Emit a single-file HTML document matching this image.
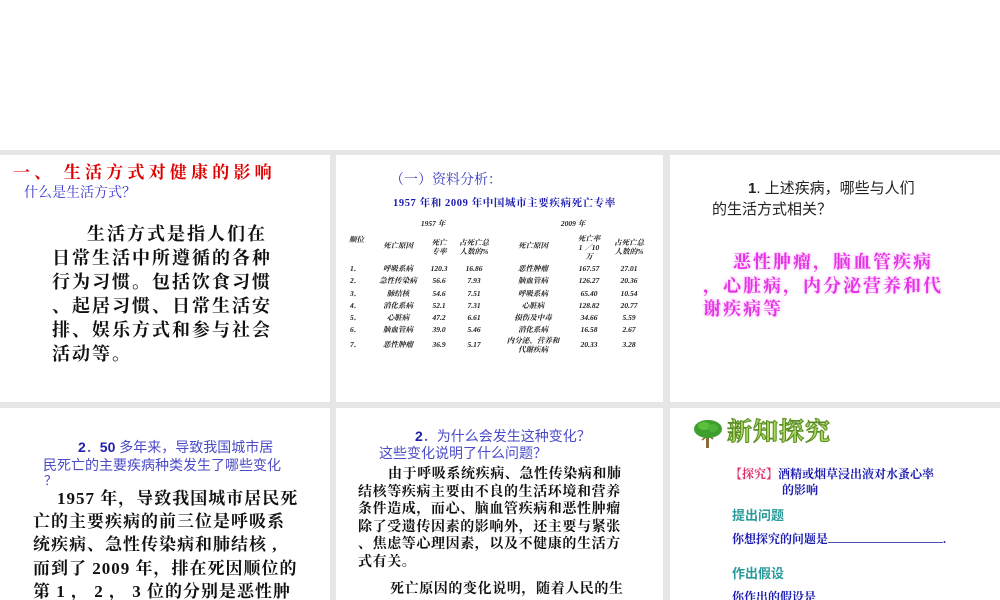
<!DOCTYPE html>
<html><head><meta charset="utf-8"><style>
*{margin:0;padding:0;box-sizing:border-box}
html,body{width:1000px;height:600px;overflow:hidden}
body{position:relative;background:#fff;font-family:"Liberation Serif","Noto Serif CJK SC","Noto Sans CJK SC",serif}
.g{position:absolute;background:#e6e6e6}
.p{position:absolute;background:#fff;overflow:hidden}
.t{position:absolute;white-space:nowrap;line-height:1}
.c{transform:translateX(-50%);text-align:center}
.tb{font-style:italic;font-weight:bold;font-size:7.5px;color:#222}
.bk{font-family:"Liberation Sans","Noto Sans CJK SC",sans-serif}
.ml{position:absolute;white-space:nowrap}
</style></head><body>
<div class="g" style="left:0;top:150px;width:1000px;height:450px"></div>
<div class="p" style="left:0;top:155px;width:330px;height:247px"></div>
<div class="p" style="left:336px;top:155px;width:327px;height:247px"></div>
<div class="p" style="left:670px;top:155px;width:330px;height:247px"></div>
<div class="p" style="left:0;top:408px;width:330px;height:192px"></div>
<div class="p" style="left:336px;top:408px;width:327px;height:192px"></div>
<div class="p" style="left:670px;top:408px;width:330px;height:192px"></div>

<!-- panel 1 -->
<div class="t" style="left:13px;top:164px;font-size:17px;font-weight:bold;color:#e00000;letter-spacing:4.2px">一、 生活方式对健康的影响</div>
<div class="t" style="left:24px;top:187px;font-size:14px;color:#3b3bd0">什么是生活方式？</div>
<div class="ml" style="left:52px;top:222px;font-size:18px;font-weight:bold;line-height:24px;letter-spacing:2px;color:#111"><span style="padding-left:35px"></span>生活方式是指人们在<br>日常生活中所遵循的各种<br>行为习惯。包括饮食习惯<br>、起居习惯、日常生活安<br>排、娱乐方式和参与社会<br>活动等。</div>

<!-- panel 2 -->
<div class="t" style="left:390px;top:174px;font-size:14px;color:#3b3bc0">（一）资料分析：</div>
<div class="t" style="left:393px;top:199px;font-size:10.5px;font-weight:bold;color:#1a1ab0;letter-spacing:0.6px">1957 年和 2009 年中国城市主要疾病死亡专率</div>
<div class="t tb c" style="left:433px;top:220px">1957 年</div>
<div class="t tb c" style="left:573px;top:220px">2009 年</div>
<div class="t tb" style="left:349px;top:236px">顺位</div>
<div class="t tb c" style="left:398px;top:242px">死亡原因</div>
<div class="t tb c" style="left:439px;top:238px;line-height:9px">死亡<br>专率</div>
<div class="t tb c" style="left:474px;top:238px;line-height:9px">占死亡总<br>人数的%</div>
<div class="t tb c" style="left:533px;top:242px">死亡原因</div>
<div class="t tb c" style="left:589px;top:234px;line-height:9px">死亡率<br>1 ／10<br>万</div>
<div class="t tb c" style="left:629px;top:238px;line-height:9px">占死亡总<br>人数的%</div>

<div class="t tb" style="left:350px;top:263px;line-height:12.3px">1．<br>2．<br>3．<br>4．<br>5．<br>6．</div>
<div class="t tb c" style="left:398px;top:263px;line-height:12.3px">呼吸系病<br>急性传染病<br>肺结核<br>消化系病<br>心脏病<br>脑血管病</div>
<div class="t tb c" style="left:439px;top:263px;line-height:12.3px">120.3<br>56.6<br>54.6<br>52.1<br>47.2<br>39.0</div>
<div class="t tb c" style="left:474px;top:263px;line-height:12.3px">16.86<br>7.93<br>7.51<br>7.31<br>6.61<br>5.46</div>
<div class="t tb c" style="left:533px;top:263px;line-height:12.3px">恶性肿瘤<br>脑血管病<br>呼吸系病<br>心脏病<br>损伤及中毒<br>消化系病</div>
<div class="t tb c" style="left:589px;top:263px;line-height:12.3px">167.57<br>126.27<br>65.40<br>128.82<br>34.66<br>16.58</div>
<div class="t tb c" style="left:629px;top:263px;line-height:12.3px">27.01<br>20.36<br>10.54<br>20.77<br>5.59<br>2.67</div>
<div class="t tb" style="left:350px;top:341px">7．</div>
<div class="t tb c" style="left:398px;top:341px">恶性肿瘤</div>
<div class="t tb c" style="left:439px;top:341px">36.9</div>
<div class="t tb c" style="left:474px;top:341px">5.17</div>
<div class="t tb c" style="left:533px;top:336px;line-height:9px">内分泌、营养和<br>代谢疾病</div>
<div class="t tb c" style="left:589px;top:341px">20.33</div>
<div class="t tb c" style="left:629px;top:341px">3.28</div>

<!-- panel 3 -->
<div class="t bk" style="left:748px;top:181px;font-size:15px;color:#222"><b>1</b>. 上述疾病，哪些与人们</div>
<div class="t bk" style="left:712px;top:202px;font-size:15px;color:#222">的生活方式相关？</div>
<div class="ml" style="left:703px;top:251px;font-size:18px;font-weight:bold;line-height:23.5px;letter-spacing:2px;color:#e633e6;text-shadow:0 0 3px #f7a8f7"><span style="padding-left:30px"></span>恶性肿瘤，脑血管疾病<br>，心脏病，内分泌营养和代<br>谢疾病等</div>

<!-- panel 4 -->
<div class="t bk" style="left:78px;top:440px;font-size:14px;color:#4b4bc8"><b style="color:#2020a8">2</b>．<b style="color:#2020a8">50</b> 多年来，导致我国城市居</div>
<div class="t bk" style="left:43px;top:458px;font-size:14px;color:#4b4bc8">民死亡的主要疾病种类发生了哪些变化</div>
<div class="t bk" style="left:44px;top:474px;font-size:13px;color:#4b4bc8">？</div>
<div class="ml" style="left:33px;top:487px;font-size:17px;font-weight:bold;line-height:23.2px;letter-spacing:1px;color:#111"><span style="padding-left:24px"></span>1957 年，导致我国城市居民死<br>亡的主要疾病的前三位是呼吸系<br>统疾病、急性传染病和肺结核 ,<br>而到了 2009 年，排在死因顺位的<br>第 1 ， 2 ， 3 位的分别是恶性肿</div>

<!-- panel 5 -->
<div class="t bk" style="left:415px;top:429px;font-size:14px;color:#4b4bc8"><b style="color:#2020a8">2</b>．为什么会发生这种变化？</div>
<div class="t bk" style="left:379px;top:446px;font-size:14px;color:#4b4bc8">这些变化说明了什么问题？</div>
<div class="ml" style="left:358px;top:466px;font-size:14px;font-weight:bold;line-height:17.6px;letter-spacing:0.6px;color:#111"><span style="padding-left:30px"></span>由于呼吸系统疾病、急性传染病和肺<br>结核等疾病主要由不良的生活环境和营养<br>条件造成，而心、脑血管疾病和恶性肿瘤<br>除了受遗传因素的影响外，还主要与紧张<br>、焦虑等心理因素，以及不健康的生活方<br>式有关。</div>
<div class="t" style="left:390px;top:583px;font-size:14px;font-weight:bold;letter-spacing:0.6px;color:#111">死亡原因的变化说明，随着人民的生</div>

<!-- panel 6 -->
<svg style="position:absolute;left:692px;top:418px" width="32" height="32" viewBox="0 0 32 32">
<rect x="14" y="14" width="3" height="16" fill="#8a6a3a"/>
<path d="M10 22 L15 18 M21 21 L16 17" stroke="#8a6a3a" stroke-width="1.5"/>
<ellipse cx="16" cy="11" rx="14" ry="9" fill="#3e9e2e"/>
<ellipse cx="12" cy="8" rx="6" ry="4" fill="#5cc03c"/>
<ellipse cx="21" cy="10" rx="5" ry="4" fill="#4db236"/>
</svg>
<div class="t" style="left:727px;top:420px;font-size:25px;font-weight:bold;color:#a8d860;letter-spacing:1px;-webkit-text-stroke:1px #5a8a28;text-shadow:0 0 2px #d8f0a0">新知探究</div>
<div class="t" style="left:730px;top:468px;font-size:12px;font-weight:bold;color:#1a1ab0"><span style="color:#e0306a">【探究】</span>酒精或烟草浸出液对水蚤心率</div>
<div class="t" style="left:782px;top:484px;font-size:12px;font-weight:bold;color:#1a1ab0">的影响</div>
<div class="t bk" style="left:732px;top:509px;font-size:13px;color:#2a9a9a;font-weight:bold">提出问题</div>
<div class="t" style="left:732px;top:533px;font-size:12px;font-weight:bold;color:#1a1ab0">你想探究的问题是<span style="display:inline-block;width:115px;border-bottom:1px solid #5050b0;height:10px"></span>.</div>
<div class="t bk" style="left:732px;top:567px;font-size:13px;color:#2a9a9a;font-weight:bold">作出假设</div>
<div class="t" style="left:732px;top:591px;font-size:12px;font-weight:bold;color:#1a1ab0">你作出的假设是</div>
</body></html>
